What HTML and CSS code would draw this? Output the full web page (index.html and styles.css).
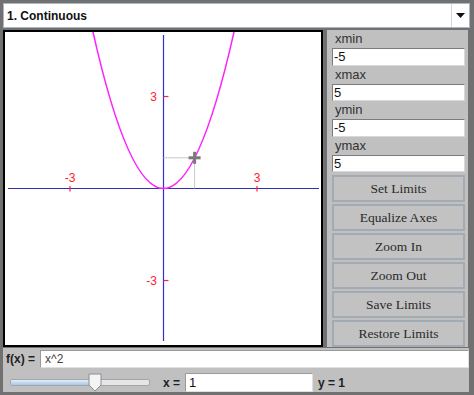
FILE: index.html
```html
<!DOCTYPE html>
<html>
<head>
<meta charset="utf-8">
<link rel="stylesheet" href="styles.css">
</head>
<body>
<div class="app">
  <div class="select">
    <span class="select-text">1. Continuous</span>
    <span class="select-btn"><svg width="9" height="5" viewBox="0 0 9 5"><path d="M0 0 L9 0 L4.5 5 Z" fill="#111"/></svg></span>
  </div>
  <div class="main">
    <div class="canvas">
      <svg class="graph" width="316" height="313" viewBox="0 0 316 313">
        <line x1="3" y1="156.5" x2="314" y2="156.5" stroke="#3030b0" stroke-width="1.2"/>
        <line x1="158.5" y1="3" x2="158.5" y2="309" stroke="#3030c8" stroke-width="1.2"/>
        <line x1="65" y1="154" x2="65" y2="159.5" stroke="#ff2040" stroke-width="1.2"/>
        <line x1="252" y1="154" x2="252" y2="159.5" stroke="#ff2040" stroke-width="1.2"/>
        <line x1="158.5" y1="64.5" x2="163.5" y2="64.5" stroke="#ff2040" stroke-width="1.2"/>
        <line x1="158.5" y1="248.5" x2="163.5" y2="248.5" stroke="#ff2040" stroke-width="1.2"/>
        <text class="tick" x="65" y="150" text-anchor="middle">-3</text>
        <text class="tick" x="252" y="150" text-anchor="middle">3</text>
        <text class="tick" x="152" y="69" text-anchor="end">3</text>
        <text class="tick" x="152" y="253" text-anchor="end">-3</text>
        <line x1="158.5" y1="125.8" x2="189.6" y2="125.8" stroke="#c8c8c8" stroke-width="1"/>
        <line x1="189.6" y1="125.8" x2="189.6" y2="156.5" stroke="#c8c8c8" stroke-width="1"/>
        <path d="M86.7 -5.8 Q158.5 318.8 230.3 -5.8" fill="none" stroke="#ff20ff" stroke-width="1.5"/>
        <line x1="183.6" y1="125.8" x2="195.6" y2="125.8" stroke="#7a7a7a" stroke-width="3"/>
        <line x1="189.6" y1="119.8" x2="189.6" y2="131.8" stroke="#7a7a7a" stroke-width="3"/>
      </svg>
    </div>
    <div class="panel">
      <div class="lbl">xmin</div>
      <input class="field" value="-5">
      <div class="lbl">xmax</div>
      <input class="field" value="5">
      <div class="lbl">ymin</div>
      <input class="field" value="-5">
      <div class="lbl">ymax</div>
      <input class="field" value="5">
      <div class="buttons">
        <button class="btn">Set Limits</button>
        <button class="btn">Equalize Axes</button>
        <button class="btn">Zoom In</button>
        <button class="btn">Zoom Out</button>
        <button class="btn">Save Limits</button>
        <button class="btn">Restore Limits</button>
      </div>
    </div>
  </div>
  <div class="bottom">
    <div class="row1">
      <span class="bold fxl">f(x) =</span>
      <input class="fx" value="x^2">
    </div>
    <div class="row2">
      <div class="slider">
        <div class="track"><div class="fill"></div></div>
        <svg class="thumb" width="14" height="19" viewBox="0 0 14 19"><path d="M1 1 H13 V12 L7 18 L1 12 Z" fill="#f4f4f4" stroke="#8a8f96" stroke-width="1"/></svg>
      </div>
      <span class="bold xeq">x =</span>
      <input class="xin" value="1">
      <span class="bold yeq">y = 1</span>
    </div>
  </div>
</div>
</body>
</html>
```

FILE: styles.css
```css
html, body {
  margin: 0;
  padding: 0;
}
body {
  background: #717171;
  font-family: "Liberation Sans", Arial, sans-serif;
}
.app {
  width: 474px;
  height: 395px;
  box-sizing: border-box;
  padding: 3px 4px 3px 3px;
  background: #717171;
  display: flex;
  flex-direction: column;
}
.select {
  height: 25px;
  box-sizing: border-box;
  background: #fff;
  border: 1px solid #a9b6c4;
  display: flex;
  align-items: center;
  justify-content: space-between;
}
.select-text {
  font-weight: bold;
  font-size: 12px;
  color: #111;
  padding-left: 3px;
}
.select-btn {
  width: 17px;
  height: 23px;
  border-left: 1px solid #d4d8dc;
  display: flex;
  align-items: center;
  justify-content: center;
}
.main {
  margin-top: 2px;
  height: 317px;
  display: flex;
}
.canvas {
  width: 320px;
  height: 317px;
  box-sizing: border-box;
  border: 2px solid #000;
  background: #fff;
  overflow: hidden;
}
.graph {
  display: block;
}
.tick {
  font-family: "Liberation Sans", Arial, sans-serif;
  font-size: 12px;
  fill: #ff2030;
}
.panel {
  margin-left: 4px;
  margin-right: 2px;
  flex: 1;
  background: #c0c0c0;
  padding: 0 3px 0 5px;
  box-sizing: border-box;
  overflow: hidden;
  display: flex;
  flex-direction: column;
}
.lbl {
  height: 18px;
  line-height: 18px;
  font-size: 13px;
  color: #333;
  padding-left: 3px;
}
.field {
  display: block;
  width: 100%;
  height: 18px;
  box-sizing: border-box;
  margin: 0;
  padding: 0 1px;
  border: 1px solid #8c8c8c;
  border-color: #7c7c7c #d8d8d8 #d8d8d8 #7c7c7c;
  background: #fff;
  font-family: "Liberation Sans", Arial, sans-serif;
  font-size: 13px;
  color: #111;
}
.buttons {
  margin-top: 3px;
  display: flex;
  flex-direction: column;
  gap: 2px;
}
.btn {
  height: 27px;
  flex: none;
  margin: 0;
  padding: 0;
  background: #c2c2c2;
  border: 2px solid #a2abb3;
  font-family: "Liberation Serif", "Times New Roman", serif;
  font-size: 13.5px;
  font-weight: normal;
  color: #2a2a2a;
}
.bottom {
  margin-top: 1px;
  margin-right: 1px;
  flex: 1;
  background: #c0c0c0;
  padding: 2px 0 0 3px;
  display: flex;
  flex-direction: column;
}
.bold {
  font-weight: bold;
  font-size: 12px;
  color: #222;
}
.row1 {
  display: flex;
  align-items: center;
  height: 18px;
}
.fxl {
  width: 34px;
}
.fx {
  flex: 1;
  height: 18px;
  box-sizing: border-box;
  margin: 0;
  padding: 0 4px;
  border: 1px solid #c8c8c8;
  border-color: #9a9a9a #e0e0e0 #e0e0e0 #9a9a9a;
  background: #fff;
  font-family: "Liberation Sans", Arial, sans-serif;
  font-size: 12px;
  color: #444;
}
.row2 {
  display: flex;
  align-items: center;
  margin-top: 5px;
  height: 19px;
}
.slider {
  position: relative;
  width: 140px;
  height: 19px;
  margin-left: 4px;
}
.track {
  position: absolute;
  left: 0;
  right: 0;
  top: 6px;
  height: 5px;
  border: 1px solid #9fa6ae;
  border-radius: 2px;
  background: #e6e6e6;
  overflow: hidden;
}
.fill {
  width: 82px;
  height: 100%;
  background: linear-gradient(#e4eef9, #a9c6e6);
}
.thumb {
  position: absolute;
  left: 78px;
  top: 0;
}
.xeq {
  margin-left: 13px;
  width: 22px;
}
.xin {
  width: 128px;
  height: 19px;
  box-sizing: border-box;
  margin: 0;
  padding: 0 3px;
  border: 1px solid #c8c8c8;
  border-color: #9a9a9a #e0e0e0 #e0e0e0 #9a9a9a;
  background: #fff;
  font-family: "Liberation Sans", Arial, sans-serif;
  font-size: 13px;
  color: #111;
}
.yeq {
  margin-left: 5px;
}
```
